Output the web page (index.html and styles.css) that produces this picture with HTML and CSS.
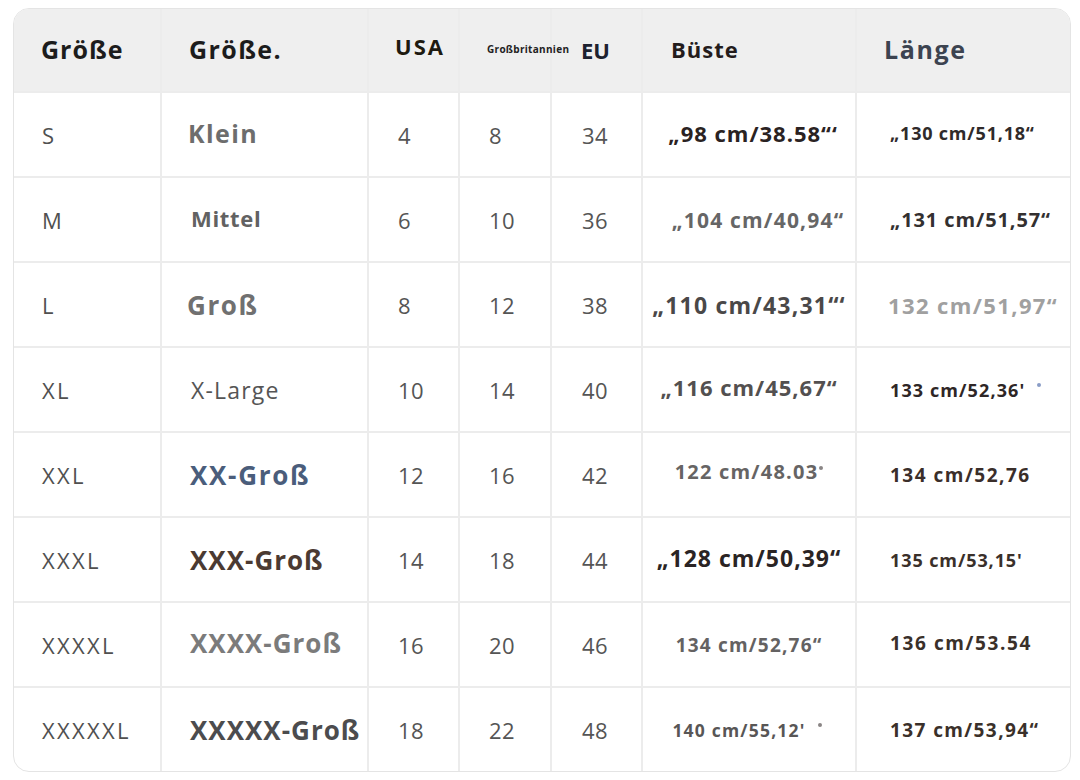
FILE: index.html
```html
<!DOCTYPE html>
<html lang="de">
<head>
<meta charset="utf-8">
<title>Größentabelle</title>
<link rel="stylesheet" href="styles.css">
</head>
<body>
<div class="chart">
  <table class="sizes">
    <colgroup>
      <col class="c1"><col class="c2"><col class="c3"><col class="c4"><col class="c5"><col class="c6"><col class="c7">
    </colgroup>
    <thead>
      <tr>
        <th class="h-size">Größe</th>
        <th class="h-name">Größe.</th>
        <th class="h-usa">USA</th>
        <th class="h-uk">Großbritannien</th>
        <th class="h-eu">EU</th>
        <th class="h-bust">Büste</th>
        <th class="h-len">Länge</th>
      </tr>
    </thead>
    <tbody>
      <tr>
        <td class="sz">S</td>
        <td class="nm nm-klein">Klein</td>
        <td class="num">4</td><td class="num">8</td><td class="num eu">34</td>
        <td class="bust b1">„98 cm/38.58“‘</td>
        <td class="len l1">„130 cm/51,18“</td>
      </tr>
      <tr>
        <td class="sz">M</td>
        <td class="nm nm-mittel">Mittel</td>
        <td class="num">6</td><td class="num">10</td><td class="num eu">36</td>
        <td class="bust b2">„104 cm/40,94“</td>
        <td class="len l2">„131 cm/51,57“</td>
      </tr>
      <tr>
        <td class="sz">L</td>
        <td class="nm nm-gross">Groß</td>
        <td class="num">8</td><td class="num">12</td><td class="num eu">38</td>
        <td class="bust b3">„110 cm/43,31“‘</td>
        <td class="len l3">132 cm/51,97“</td>
      </tr>
      <tr>
        <td class="sz">XL</td>
        <td class="nm nm-xl">X-Large</td>
        <td class="num">10</td><td class="num">14</td><td class="num eu">40</td>
        <td class="bust b4">„116 cm/45,67“</td>
        <td class="len l4">133 cm/52,36'<span class="dot dot-blue"></span></td>
      </tr>
      <tr>
        <td class="sz">XXL</td>
        <td class="nm nm-xx">XX-Groß</td>
        <td class="num">12</td><td class="num">16</td><td class="num eu">42</td>
        <td class="bust b5">122 cm/48.03<span class="dot"></span></td>
        <td class="len l5">134 cm/52,76</td>
      </tr>
      <tr>
        <td class="sz">XXXL</td>
        <td class="nm nm-xxx">XXX-Groß</td>
        <td class="num">14</td><td class="num">18</td><td class="num eu">44</td>
        <td class="bust b6">„128 cm/50,39“</td>
        <td class="len l6">135 cm/53,15'</td>
      </tr>
      <tr>
        <td class="sz">XXXXL</td>
        <td class="nm nm-xxxx">XXXX-Groß</td>
        <td class="num">16</td><td class="num">20</td><td class="num eu">46</td>
        <td class="bust b7">134 cm/52,76“</td>
        <td class="len l7">136 cm/53.54</td>
      </tr>
      <tr>
        <td class="sz">XXXXXL</td>
        <td class="nm nm-xxxxx">XXXXX-Groß</td>
        <td class="num">18</td><td class="num">22</td><td class="num eu">48</td>
        <td class="bust b8">140 cm/55,12'<span class="dot dot-far"></span></td>
        <td class="len l8">137 cm/53,94“</td>
      </tr>
    </tbody>
  </table>
</div>
</body>
</html>
```
FILE: styles.css
```css
html, body {
  margin: 0;
  padding: 0;
  background: #ffffff;
}

body {
  font-family: "Open Sans", "Noto Sans", "Liberation Sans", sans-serif;
  color: #555555;
}

.chart {
  margin: 8px 9px 0 13px;
  width: 1056px;
  height: 762px;
  border: 1px solid #e4e4e4;
  border-radius: 16px;
  overflow: hidden;
  background: #ffffff;
}

.sizes {
  width: 1056px;
  height: 762px;
  border-collapse: collapse;
  table-layout: fixed;
}

.c1 { width: 147px; }
.c2 { width: 207px; }
.c3 { width: 91px; }
.c4 { width: 92px; }
.c5 { width: 91px; }
.c6 { width: 214px; }
.c7 { width: 214px; }

th, td {
  padding: 0;
  vertical-align: middle;
  white-space: nowrap;
  overflow: visible;
}

.sizes th,
.sizes td {
  border: 2px solid #ececec;
}

.sizes tr > *:first-child { border-left: none; }
.sizes tr > *:last-child { border-right: none; }
.sizes thead tr > * { border-top: none; }
.sizes tbody tr:last-child > * { border-bottom: none; }

.sizes thead tr {
  height: 83px;
  background: #efefef;
}

.sizes tbody tr {
  height: 85px;
}

th {
  text-align: left;
  font-weight: 700;
  color: #1c1c1c;
  padding-bottom: 2px;
}

.h-size { padding-left: 27px; font-size: 25px; letter-spacing: 1px; }
.h-name { padding-left: 27px; font-size: 25px; letter-spacing: 1.4px; }
.h-usa { padding-left: 26px; font-size: 22px; letter-spacing: 2px; padding-bottom: 8px; color: #1e1a10; }
.h-uk { padding-left: 27px; font-size: 10px; letter-spacing: 0.3px; color: #222222; }
.h-eu { padding-left: 29px; font-size: 22px; padding-top: 2px; color: #1d2230; }
.h-bust { padding-left: 28px; font-size: 22px; letter-spacing: 1px; color: #241c1c; }
.h-len { padding-left: 27px; font-size: 25px; letter-spacing: 1.6px; color: #3c4350; }

.sz {
  padding-left: 28px;
  font-size: 22px;
  letter-spacing: 2.3px;
  color: #505050;
}

.nm {
  padding-left: 26px;
  font-weight: 700;
  font-size: 26px;
  letter-spacing: 1px;
  color: #6c6c6c;
}

.nm-klein { color: #6d6d6d; padding-bottom: 4px; font-size: 25px; letter-spacing: 1.4px; }
.nm-mittel { font-size: 22px; letter-spacing: 0.7px; color: #626262; padding-left: 29px; padding-bottom: 4px; }
.nm-gross { color: #707070; padding-left: 25px; letter-spacing: 1.6px; }
.nm-xl { font-weight: 400; font-size: 23px; letter-spacing: 1.2px; color: #555555; padding-left: 29px; }
.nm-xx { color: #4a5d7b; letter-spacing: 1.7px; padding-left: 28px; }
.nm-xxx { color: #4b3a32; padding-left: 28px; }
.nm-xxxx { color: #7b7b7b; padding-bottom: 4px; padding-left: 28px; }
.nm-xxxxx { color: #4c4c4e; padding-left: 28px; }

.num {
  padding-left: 29px;
  font-size: 22px;
  letter-spacing: 0.5px;
  color: #555555;
}

.num.eu { padding-left: 30px; }

.bust {
  text-align: center;
  font-weight: 700;
  color: #555555;
  letter-spacing: 1.2px;
}

.b1 { font-size: 22px; letter-spacing: 1px; color: #2a2222; padding-bottom: 4px; padding-left: 8px; }
.b2 { font-size: 21px; color: #666666; padding-left: 18px; }
.b3 { font-size: 23px; color: #4a4848; }
.b4 { font-size: 22px; letter-spacing: 1px; color: #535050; padding-bottom: 6px; }
.b5 { font-size: 20px; color: #666464; padding-bottom: 6px; }
.b6 { font-size: 23px; letter-spacing: 1px; color: #2a2424; padding-bottom: 4px; }
.b7 { font-size: 19px; color: #646262; }
.b8 { font-size: 17.5px; color: #585656; padding-right: 4px; }

.len {
  padding-left: 33px;
  font-weight: 700;
  color: #3a302c;
}

.l1 { font-size: 18px; letter-spacing: 0.8px; color: #2f2a2a; padding-bottom: 4px; }
.l2 { font-size: 20px; letter-spacing: 0.9px; color: #333030; }
.l3 { font-size: 22px; letter-spacing: 1.4px; color: #a0a0a0; padding-left: 31px; }
.l4 { font-size: 18px; letter-spacing: 1.1px; color: #2e2626; }
.l5 { font-size: 19px; letter-spacing: 1.5px; color: #3a2e2a; }
.l6 { font-size: 18px; letter-spacing: 0.9px; color: #3a302a; }
.l7 { font-size: 19px; letter-spacing: 1.6px; color: #3a302a; padding-bottom: 4px; }
.l8 { font-size: 19px; letter-spacing: 1.4px; color: #3a302a; }

.dot {
  display: inline-block;
  width: 4px;
  height: 4px;
  border-radius: 50%;
  background: #8a8585;
  margin-left: 1px;
  vertical-align: 9px;
}

.dot-blue {
  background: #8a9cc6;
  margin-left: 12px;
  vertical-align: 10px;
}

.dot-far {
  margin-left: 12px;
  vertical-align: 10px;
}
```
